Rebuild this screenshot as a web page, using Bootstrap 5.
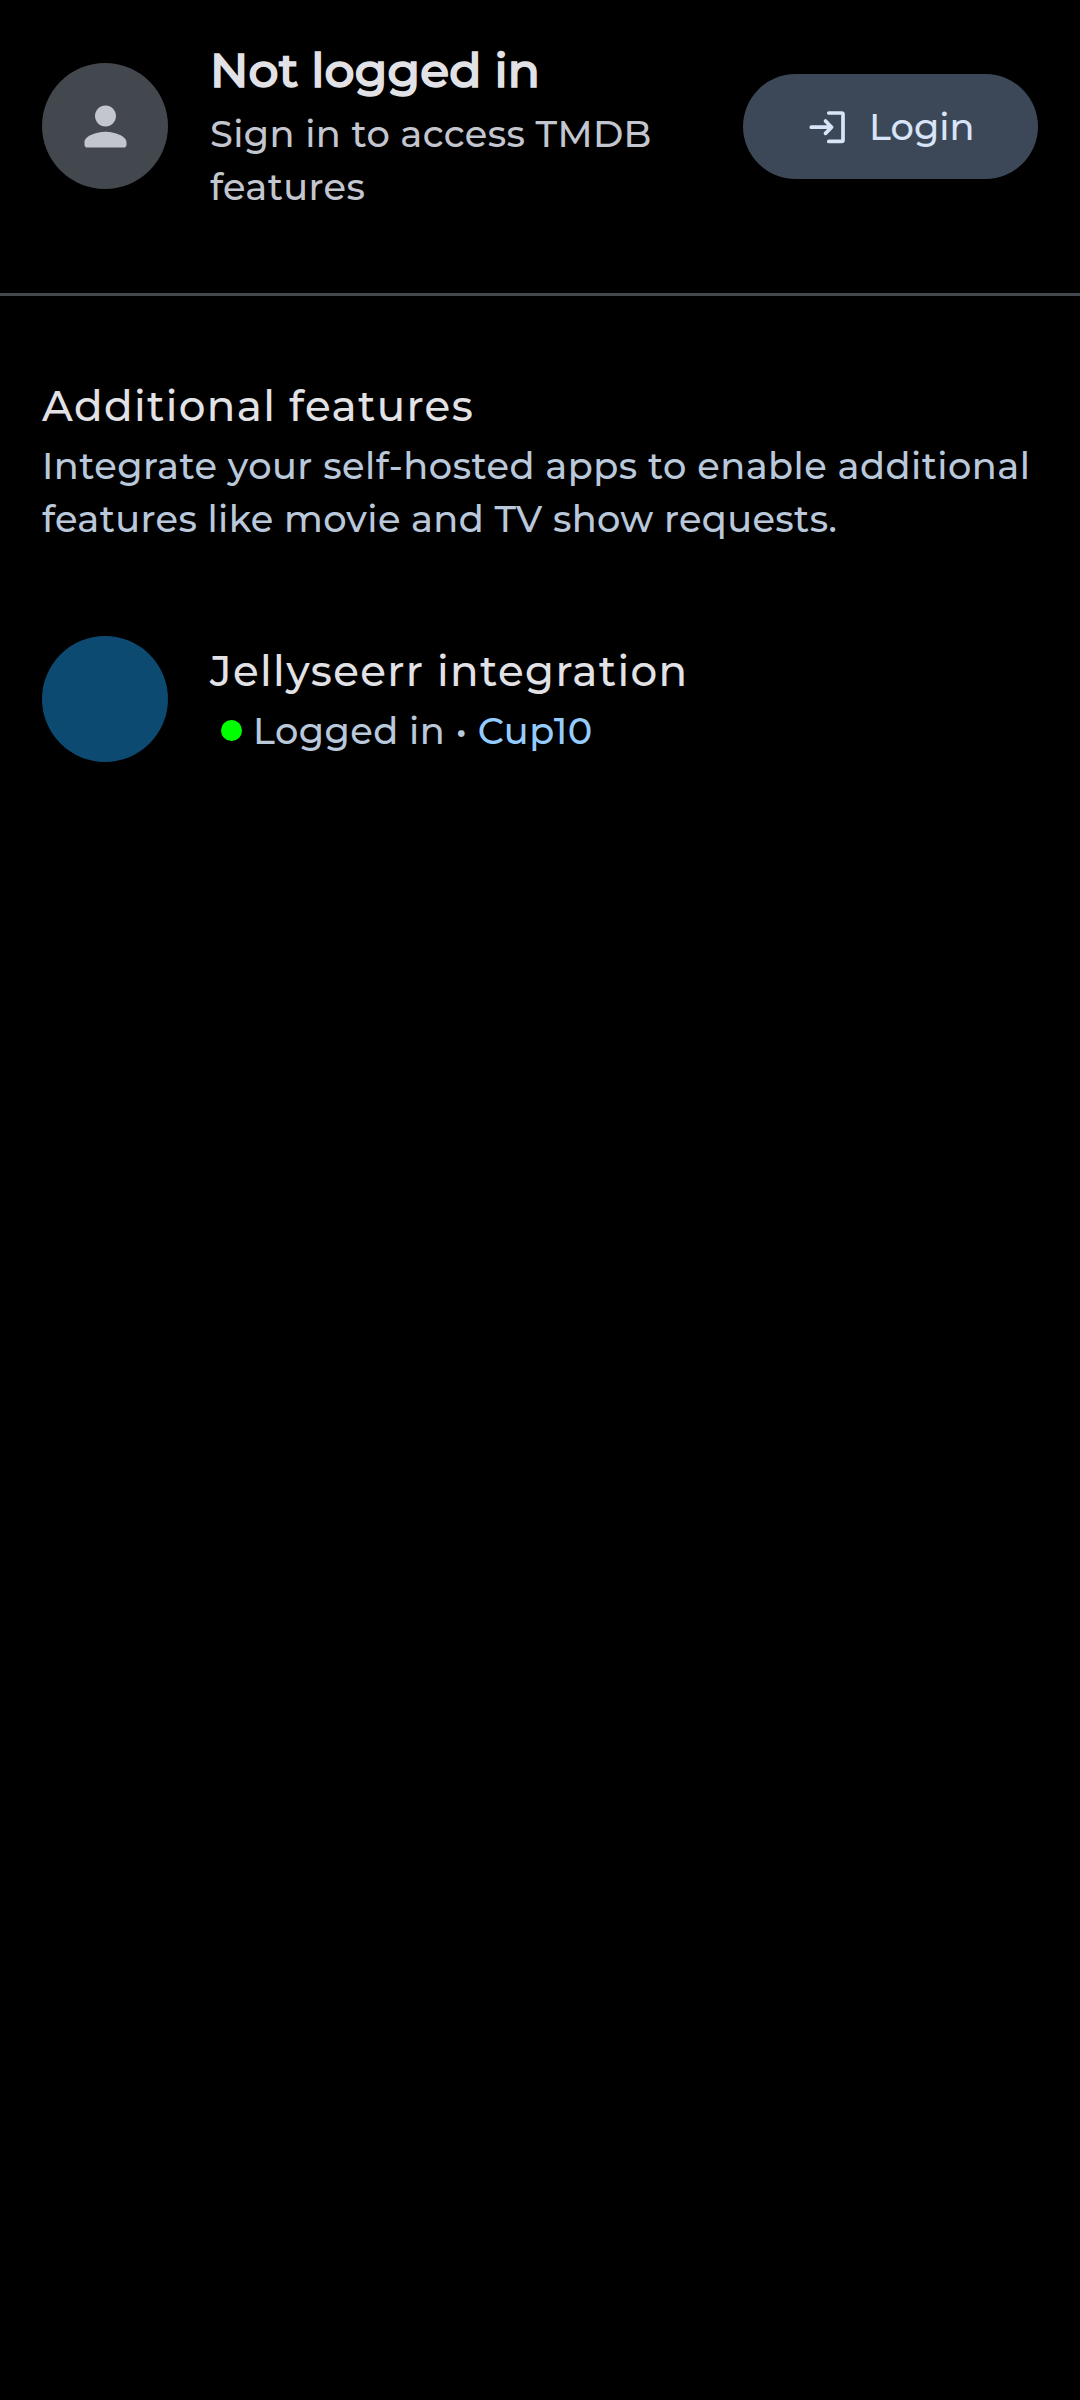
<!DOCTYPE html>
<html lang="en" data-bs-theme="dark">
<head>
<meta charset="utf-8">
<meta name="viewport" content="width=device-width, initial-scale=1">
<title>Account</title>
<link href="https://cdn.jsdelivr.net/npm/bootstrap@5.3.0/dist/css/bootstrap.min.css" rel="stylesheet">
<style>
body{background:#000;color:#e2e2e6;font-family:Montserrat,Inter,"Open Sans",sans-serif;font-weight:500;min-height:100vh;white-space:nowrap}
.account-bar{padding:36px 42px 0;height:293px}
.account-bar .disc{margin-top:27px}
.settings{padding:80px 42px 0}
.integration{margin-top:91px}
.copy{margin-left:42px}
.disc{width:126px;height:126px;background:#43474e;color:#c3c6cf}
.disc-blue{background:#0d4a72}
.title-lg{font-size:47.25px;font-weight:500;line-height:68px;letter-spacing:.15px;color:#e2e2e6;-webkit-text-stroke:1.6px #e2e2e6}
.title-md{font-size:42px;font-weight:500;line-height:60px;letter-spacing:1.38px;color:#e2e2e6}
.text-sub{font-size:36.75px;line-height:53px;letter-spacing:.37px;padding-top:3px}
.first-line{letter-spacing:.46px}
.tone-a{color:#c3c6cf}
.tone-b{color:#b9c8da}
.tone-link{color:#95ccff}
.login-btn,.login-btn:hover{width:295px;height:105px;margin-top:38px;padding:0 0 0 63px;gap:21px;background:#3c4858;color:#d8e4f8;font-size:36.75px;font-weight:500;line-height:53px;border:0}
.rule{height:3px;background:#43474e}
.status-dot{width:21px;height:21px;background:#0f0;margin:0 11px}
.status-text{letter-spacing:.43px}
</style>
<script src="https://cdn.jsdelivr.net/npm/bootstrap@5.3.0/dist/js/bootstrap.bundle.min.js"></script>
</head>
<body>
<header class="account-bar d-flex align-items-start">
  <div class="disc rounded-circle d-flex align-items-center justify-content-center flex-shrink-0">
    <svg width="63" height="63" viewBox="0 0 24 24" fill="currentColor"><path d="M12 12c2.21 0 4-1.79 4-4s-1.79-4-4-4-4 1.79-4 4 1.79 4 4 4zm0 2c-2.67 0-8 1.34-8 4v1c0 .55.45 1 1 1h14c.55 0 1-.45 1-1v-1c0-2.66-5.33-4-8-4z"/></svg>
  </div>
  <div class="copy flex-grow-1">
    <h1 class="title-lg mb-0">Not logged in</h1>
    <p class="text-sub tone-a mb-0">Sign in to access TMDB<br>features</p>
  </div>
  <button type="button" class="login-btn btn rounded-pill d-flex align-items-center flex-shrink-0">
    <svg width="42" height="42" viewBox="0 0 42 42" fill="none" stroke="currentColor" stroke-width="3.7" stroke-linecap="round" stroke-linejoin="round"><path d="M22.8 7H35.6Q37 7 37 8.4V34Q37 35.4 35.6 35.4H22.8M5.3 21.2H25.5M19.5 15L25.6 21.2 19.5 27.4"/></svg>
    <span>Login</span>
  </button>
</header>
<div class="rule"></div>
<main class="settings">
  <section>
    <h2 class="title-md mb-0">Additional features</h2>
    <p class="text-sub tone-b mb-0"><span class="first-line">Integrate your self-hosted apps to enable additional</span><br>features like movie and TV show requests.</p>
  </section>
  <section class="integration d-flex align-items-center">
    <div class="disc disc-blue rounded-circle flex-shrink-0"></div>
    <div class="copy">
      <h2 class="title-md mb-0">Jellyseerr integration</h2>
      <div class="text-sub tone-b d-flex align-items-center">
        <span class="status-dot rounded-circle"></span>
        <span class="status-text">Logged in • <span class="tone-link">Cup10</span></span>
      </div>
    </div>
  </section>
</main>
</body>
</html>
